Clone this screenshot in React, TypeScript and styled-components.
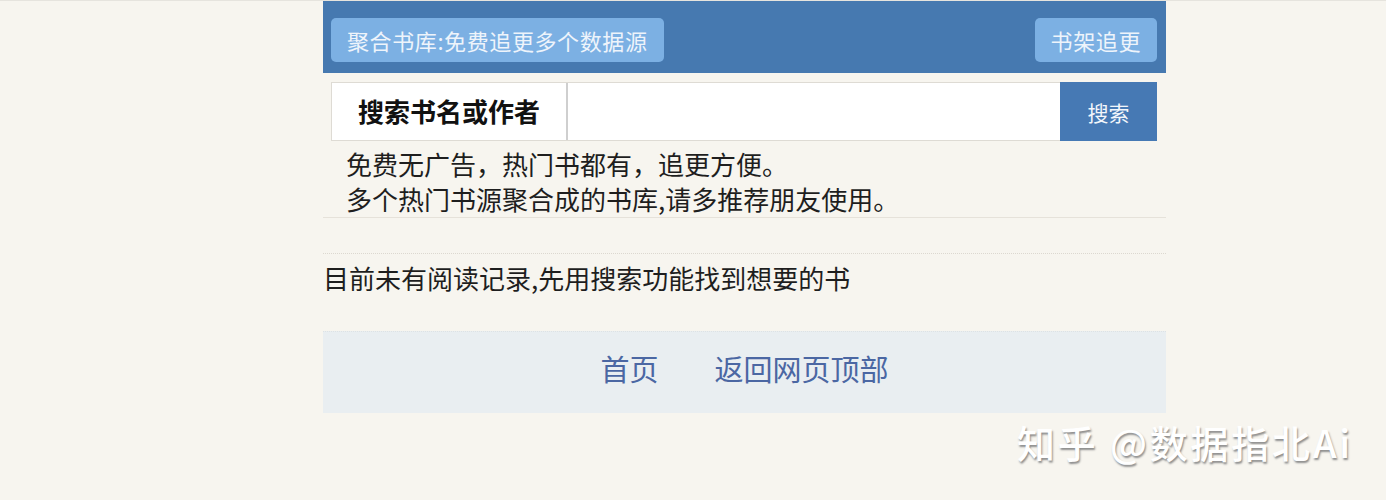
import styled, { createGlobalStyle } from "styled-components";

const Global=createGlobalStyle`
    html, body{
        margin: 0;
        padding: 0;
        background: #f7f5ef;
        font-family: "Noto Sans CJK SC", "Noto Sans", sans-serif;
        color: #1e1e1e;
    }
    body{
        border-top: 1px solid #e6e4de;
    }
    *{
        box-sizing: border-box;
    }
`;

const Container=styled.div`
    width: 843px;
    margin: 0 0 0 323px;
`;

const Header=styled.header`
    height: 72px;
    background: #4679b0;
    display: flex;
    justify-content: space-between;
    align-items: center;
    padding: 5px 9px 0 8px;
`;

const HeadBtn=styled.a`
    height: 44px;
    display: flex;
    align-items: center;
    padding: 0 16px;
    background: #7cb0e3;
    border-radius: 5px;
    color: #eef4fb;
    font-size: 22px;
    letter-spacing: 0.6px;
`;

const SearchRow=styled.form`
    margin: 9px 9px 0 8px;
    height: 59px;
    display: flex;
    background: #fff;
    border: 1px solid #dedbd4;
    border-right: none;
`;

const Label=styled.div`
    width: 236px;
    display: flex;
    align-items: center;
    justify-content: center;
    padding-bottom: 3px;
    font-size: 26px;
    font-weight: bold;
    color: #111;
    border-right: 2px solid #cfcfcf;
`;

const Input=styled.input`
    flex: 1;
    border: none;
    outline: none;
    background: #fff;
`;

const SearchBtn=styled.button`
    width: 97px;
    border: none;
    background: #4679b4;
    color: #f2f6fb;
    font-size: 21px;
    font-family: inherit;
    margin: -1px 0;
`;

const Intro=styled.div`
    padding: 5px 0 0 23px;
    height: 77px;
    font-size: 26px;
    line-height: 35px;
    border-bottom: 1px solid #e6e2da;
`;

const Gap=styled.div`
    height: 36px;
    border-bottom: 1px dotted #dcd8d0;
`;

const Notice=styled.p`
    margin: 0;
    padding-top: 5px;
    height: 77px;
    font-size: 26px;
    line-height: 38px;
`;

const Footer=styled.footer`
    height: 82px;
    background: #e9eef1;
    border-top: 1px dotted #dde2e4;
    display: flex;
    justify-content: center;
    align-items: center;
    padding-bottom: 9px;
    gap: 56px;
`;

const FootLink=styled.a`
    font-size: 29px;
    color: #4b67a3;
    line-height: 1;
`;

const Watermark=styled.div`
    position: absolute;
    left: 1017px;
    top: 414px;
    font-size: 38px;
    font-weight: 500;
    color: #ffffff;
    text-shadow: 1px 2px 2px #8d8d8d;
    letter-spacing: 2.8px;
    white-space: nowrap;
`;

function App(){
    return (
    <>
        <Global />
        <Container>
            <Header>
                <HeadBtn>聚合书库:免费追更多个数据源</HeadBtn>
                <HeadBtn>书架追更</HeadBtn>
            </Header>
            <SearchRow onSubmit={(e)=>e.preventDefault()}>
                <Label>搜索书名或作者</Label>
                <Input />
                <SearchBtn type="submit">搜索</SearchBtn>
            </SearchRow>
            <Intro>
                免费无广告，热门书都有，追更方便。<br />
                多个热门书源聚合成的书库,请多推荐朋友使用。
            </Intro>
            <Gap />
            <Notice>目前未有阅读记录,先用搜索功能找到想要的书</Notice>
            <Footer>
                <FootLink>首页</FootLink>
                <FootLink>返回网页顶部</FootLink>
            </Footer>
        </Container>
        <Watermark>知乎 @数据指北Ai</Watermark>
    </>
    );
}

export default App;
